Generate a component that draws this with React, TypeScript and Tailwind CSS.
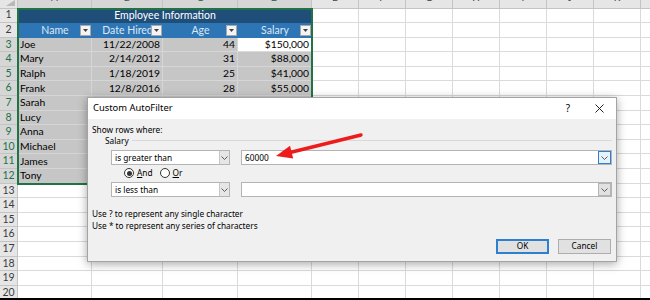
import React from 'react';

type Col = { letter: string; w: string; sel?: boolean };

const cols: Col[] = [
  { letter: 'A', w: 'w-[74px]', sel: true },
  { letter: 'B', w: 'w-[71px]', sel: true },
  { letter: 'C', w: 'w-[75px]', sel: true },
  { letter: 'D', w: 'w-[74px]', sel: true },
  { letter: 'E', w: 'w-[47px]' },
  { letter: 'F', w: 'w-[47px]' },
  { letter: 'G', w: 'w-[47px]' },
  { letter: 'H', w: 'w-[47px]' },
  { letter: 'I', w: 'w-[47px]' },
  { letter: 'J', w: 'w-[47px]' },
  { letter: 'K', w: 'w-[47px]' },
  { letter: 'L', w: 'w-[47px]' },
];

const emptyCols = cols.slice(4);

const people = [
  ['Joe', '11/22/2008', '44', '$150,000'],
  ['Mary', '2/14/2012', '31', '$88,000'],
  ['Ralph', '1/18/2019', '25', '$41,000'],
  ['Frank', '12/8/2016', '28', '$55,000'],
  ['Sarah', '3/5/2015', '36', '$72,000'],
  ['Lucy', '9/30/2017', '29', '$64,000'],
  ['Anna', '6/12/2010', '41', '$95,000'],
  ['Michael', '4/21/2014', '38', '$81,000'],
  ['James', '8/3/2018', '27', '$47,000'],
  ['Tony', '1/9/2011', '45', '$102,000'],
];

const RowHead: React.FC<{ n: number; sel?: boolean }> = ({ n, sel }) => (
  <div
    className={`w-[18px] shrink-0 h-full flex items-center justify-center border-r border-b text-[10.5px] ${
      sel ? 'bg-[#d6d6d6] text-[#217346] border-b-[#c4c4c4] border-r-[#217346]' : 'bg-[#e6e6e6] text-[#3c3c3c] border-[#c4c4c4]'
    }`}
  >
    {n}
  </div>
);

const EmptyCells = () => (
  <>
    {emptyCols.map((c) => (
      <div key={c.letter} className={`${c.w} shrink-0 h-full border-r border-b border-[#dadada]`} />
    ))}
  </>
);

const FilterBtn = () => (
  <div className="absolute right-[1px] top-[2px] w-[11px] h-[11px] bg-[#f4f4f4] border border-[#a8a8a8] flex items-center justify-center">
    <svg width="5" height="3" viewBox="0 0 5 3">
      <polygon points="0,0 5,0 2.5,3" fill="#404040" />
    </svg>
  </div>
);

const Chevron = () => (
  <svg width="7" height="4" viewBox="0 0 7 4">
    <polyline points="0.5,0.5 3.5,3.5 6.5,0.5" fill="none" stroke="#5a5a5a" strokeWidth="1" />
  </svg>
);

const Combo: React.FC<{ text: string }> = ({ text }) => (
  <div className="w-[119px] h-[15px] bg-white border border-[#b4b4b4] flex items-stretch">
    <span className="flex-1 pl-[3px] leading-[13px] whitespace-nowrap overflow-hidden">{text}</span>
    <div className="w-[10px] bg-[#e6e6e6] border-l border-[#c8c8c8] flex items-center justify-center">
      <Chevron />
    </div>
  </div>
);

const ValueBox: React.FC<{ text?: string; focused?: boolean }> = ({ text, focused }) => (
  <div className="flex-1 h-[15px] bg-white border border-[#b4b4b4] flex items-stretch">
    <span className="flex-1 pl-[3px] leading-[13px]">{text}</span>
    <div
      className={`w-[13px] flex items-center justify-center border ${
        focused ? 'bg-[#e5f1fb] border-[#2f7fd0]' : 'bg-[#e1e1e1] border-[#b4b4b4]'
      }`}
    >
      <Chevron />
    </div>
  </div>
);

const Radio: React.FC<{ checked?: boolean }> = ({ checked }) => (
  <div className="w-[10px] h-[10px] rounded-full border border-[#333] bg-white flex items-center justify-center">
    {checked && <div className="w-[5px] h-[5px] rounded-full bg-[#333]" />}
  </div>
);

const App: React.FC = () => {
  return (
    <div className="relative w-[650px] h-[300px] overflow-hidden bg-white border-b-2 border-black font-[Lato,sans-serif] text-[10.3px] text-black">
      {/* column letters */}
      <div className="flex h-[8.5px]">
        <div className="w-[18px] shrink-0 h-full bg-[#e6e6e6] border-r border-b border-[#c4c4c4] flex justify-end items-start pr-[2px]">
          <svg width="9" height="6" viewBox="0 0 9 6">
            <polygon points="0,6 9,6 9,0" fill="#b8b8b8" />
          </svg>
        </div>
        {cols.map((c) => (
          <div
            key={c.letter}
            className={`${c.w} shrink-0 h-full overflow-hidden flex items-end justify-center border-r border-b text-[10px] ${
              c.sel ? 'bg-[#d6d6d6] text-[#2b5d3d] border-r-[#c4c4c4] border-b-[#217346]' : 'bg-[#e6e6e6] text-[#444] border-[#c4c4c4]'
            }`}
          >
            <span className="leading-[14px] mb-[4px]">{c.letter}</span>
          </div>
        ))}
      </div>

      {/* row 1 */}
      <div className="flex h-[14.6px]">
        <RowHead n={1} />
        <div className="w-[294px] shrink-0 h-full bg-[#1f4e78] text-white flex items-center justify-center text-[10.5px]">
          Employee Information
        </div>
        <EmptyCells />
      </div>

      {/* row 2 */}
      <div className="flex h-[14.6px]">
        <RowHead n={2} />
        {['Name', 'Date Hired', 'Age', 'Salary'].map((h, i) => (
          <div
            key={h}
            className={`${cols[i].w} shrink-0 h-full relative bg-[#2e75b6] text-[#dce8f5] flex items-center justify-center text-[10.5px]`}
          >
            {h}
            <FilterBtn />
          </div>
        ))}
        <EmptyCells />
      </div>

      {/* data rows */}
      {people.map((p, r) => (
        <div key={p[0]} className="flex h-[14.6px]">
          <RowHead n={r + 3} sel />
          {p.map((v, i) => {
            const active = r === 0 && i === 3;
            return (
              <div
                key={i}
                className={`${cols[i].w} shrink-0 h-full flex items-center px-[2px] whitespace-nowrap overflow-hidden border-r border-b ${
                  i === 0 ? 'justify-start' : 'justify-end'
                } ${active ? 'bg-white border-[#dadada]' : 'bg-[#c6c6c6] border-[#d6d6d6]'}`}
              >
                {v}
              </div>
            );
          })}
          <EmptyCells />
        </div>
      ))}

      {/* empty rows */}
      {[13, 14, 15, 16, 17, 18, 19, 20].map((n) => (
        <div key={n} className="flex h-[14.6px]">
          <RowHead n={n} />
          {cols.slice(0, 4).map((c) => (
            <div key={c.letter} className={`${c.w} shrink-0 h-full border-r border-b border-[#dadada]`} />
          ))}
          <EmptyCells />
        </div>
      ))}

      {/* selection outline */}
      <div className="absolute left-[17px] top-[7.5px] w-[296px] h-[177px] border-2 border-[#217346] pointer-events-none" />

      {/* dialog */}
      <div className="absolute left-[87px] top-[97px] w-[530px] h-[165px] bg-[#f0f0f0] border border-[#a3a3a3] shadow-[0_2px_9px_rgba(0,0,0,0.35)] font-['Noto_Sans',sans-serif] text-[8.3px] text-black flex flex-col">
        <div className="h-[21px] bg-white flex items-center pl-[5px] pr-[12px] shrink-0">
          <span className="flex-1 text-[9.4px]">Custom AutoFilter</span>
          <span className="text-[10px] mr-[25px]">?</span>
          <svg width="9" height="9" viewBox="0 0 9 9">
            <path d="M0.5 0.5 L8.5 8.5 M8.5 0.5 L0.5 8.5" stroke="#222" strokeWidth="1" />
          </svg>
        </div>

        <div className="flex flex-col">
          <div className="mt-[5px] leading-[11px] pl-[4px]">Show rows where:</div>
          <div className="flex items-center leading-[11px] pl-[17px] pr-[4px]">
            <span>Salary</span>
            <div className="flex-1 ml-[3px] border-t border-[#d9d9d9]" />
          </div>

          <div className="flex mt-[4px] pl-[23px] pr-[4px] gap-[11px]">
            <Combo text="is greater than" />
            <ValueBox text="60000" focused />
          </div>

          <div className="flex items-center h-[14px] mt-[1px] pl-[36px]">
            <Radio checked />
            <span className="ml-[3px]">
              <span className="underline">A</span>nd
            </span>
            <div className="ml-[7px]">
              <Radio />
            </div>
            <span className="ml-[3px]">
              <span className="underline">O</span>r
            </span>
          </div>

          <div className="flex mt-[2px] pl-[23px] pr-[4px] gap-[11px]">
            <Combo text="is less than" />
            <ValueBox />
          </div>

          <div className="mt-[11px] leading-[12px] pl-[4px]">Use ? to represent any single character</div>
          <div className="leading-[12px] pl-[4px]">Use * to represent any series of characters</div>

          <div className="flex justify-end gap-[9px] mt-[7px] pr-[5px]">
            <div className="w-[53px] h-[15px] bg-[#e1e1e1] border-2 border-[#2f7fd0] flex items-center justify-center">OK</div>
            <div className="w-[53px] h-[15px] bg-[#e1e1e1] border border-[#adadad] flex items-center justify-center">Cancel</div>
          </div>
        </div>
      </div>

      {/* red arrow */}
      <svg className="absolute left-0 top-0 pointer-events-none" width="650" height="300" viewBox="0 0 650 300">
        <line x1="361" y1="135" x2="290" y2="152.5" stroke="#ee1b1b" strokeWidth="3.4" strokeLinecap="round" />
        <polygon points="276,156 290,145.8 293.2,158.6" fill="#ee1b1b" />
      </svg>
    </div>
  );
};

export default App;
